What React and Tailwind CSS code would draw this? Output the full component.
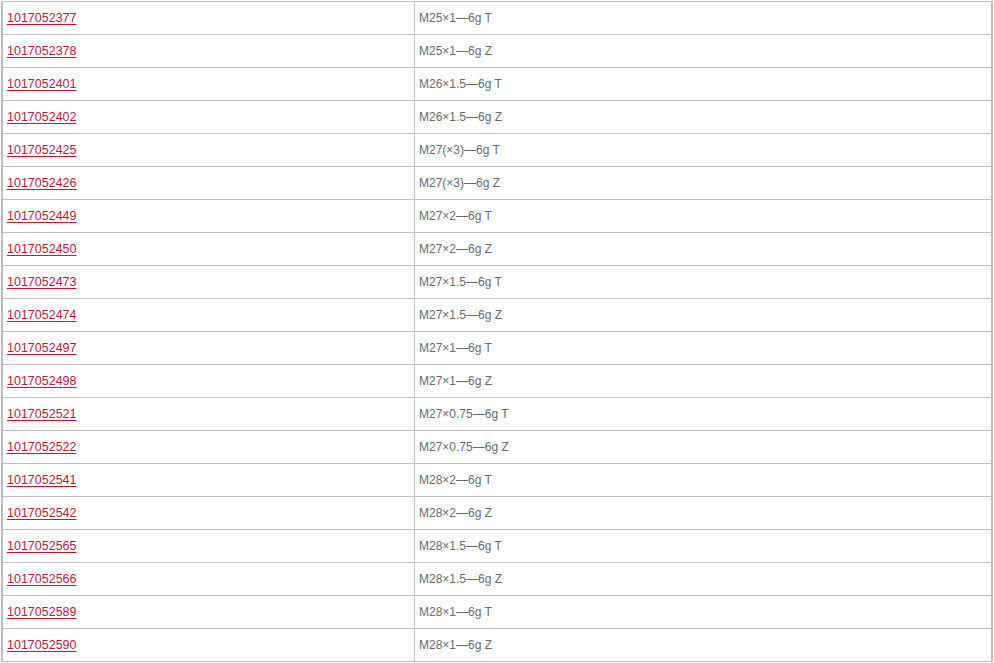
const rows = [
  ["1017052377", "M25×1—6g T"],
  ["1017052378", "M25×1—6g Z"],
  ["1017052401", "M26×1.5—6g T"],
  ["1017052402", "M26×1.5—6g Z"],
  ["1017052425", "M27(×3)—6g T"],
  ["1017052426", "M27(×3)—6g Z"],
  ["1017052449", "M27×2—6g T"],
  ["1017052450", "M27×2—6g Z"],
  ["1017052473", "M27×1.5—6g T"],
  ["1017052474", "M27×1.5—6g Z"],
  ["1017052497", "M27×1—6g T"],
  ["1017052498", "M27×1—6g Z"],
  ["1017052521", "M27×0.75—6g T"],
  ["1017052522", "M27×0.75—6g Z"],
  ["1017052541", "M28×2—6g T"],
  ["1017052542", "M28×2—6g Z"],
  ["1017052565", "M28×1.5—6g T"],
  ["1017052566", "M28×1.5—6g Z"],
  ["1017052589", "M28×1—6g T"],
  ["1017052590", "M28×1—6g Z"],
];

export default function App() {
  return (
    <div className="bg-white min-h-[663px] pt-[1px] pl-[1px]" style={{ fontFamily: '"Liberation Sans", Arial, sans-serif' }}>
      <div className="w-[992px] border-t border-t-[#c0c0c0] border-l-2 border-r-2 border-l-[#bdbdbd] border-r-[#bdbdbd]">
        {rows.map(([code, spec]) => (
          <div key={code} className="flex h-[33px] border-b border-b-[#c0c0c0]">
            <div className="w-[412px] border-r border-r-[#c0c0c0] flex items-center pl-[4px]">
              <a href="#" className="text-[12.5px] text-[#b8173f] underline decoration-[#d0122f] underline-offset-[2px] leading-none">
                {code}
              </a>
            </div>
            <div className="flex-1 flex items-center pl-[4px] text-[12px] text-[#666a70] leading-none">
              {spec}
            </div>
          </div>
        ))}
      </div>
    </div>
  );
}
